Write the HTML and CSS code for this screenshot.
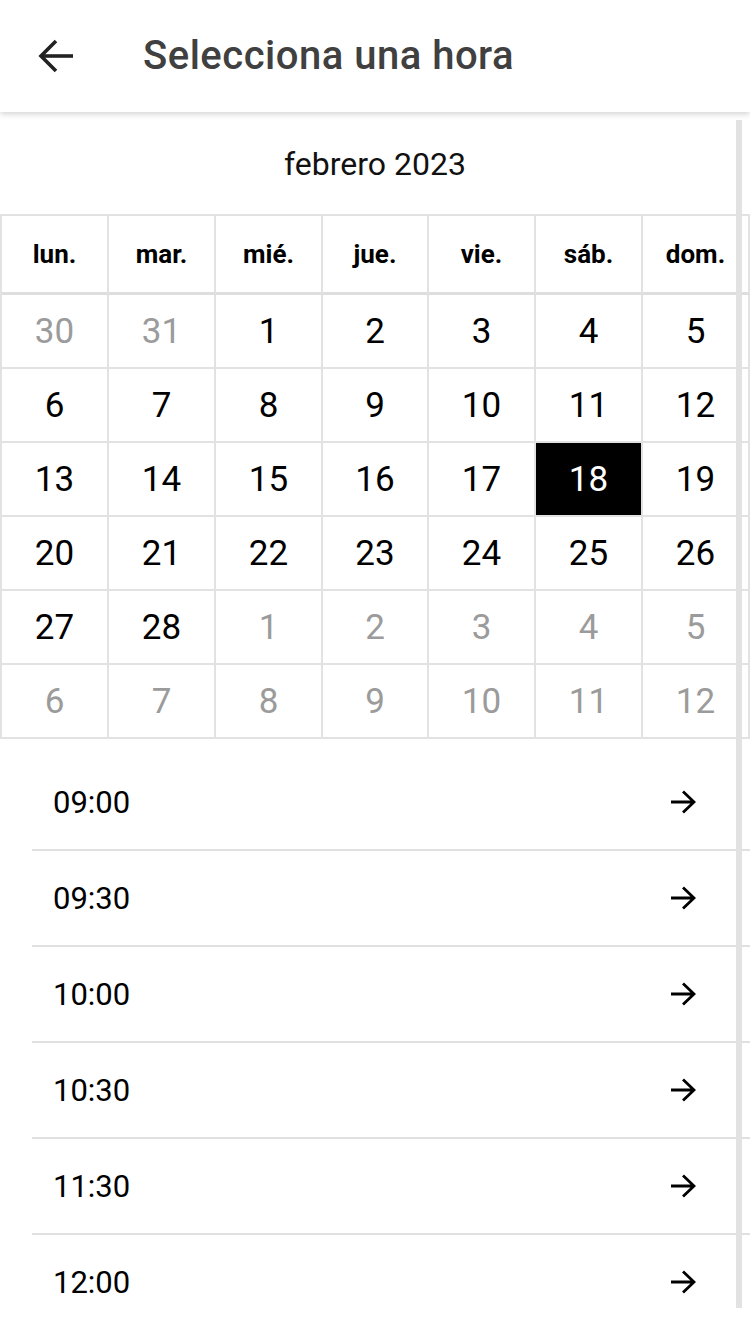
FILE: index.html
```html
<!DOCTYPE html>
<html lang="es">
<head>
<meta charset="utf-8">
<title>Selecciona una hora</title>
<link rel="stylesheet" href="styles.css">
</head>
<body>
<div class="app">
  <header class="topbar">
    <button class="back" aria-label="Atrás">
      <svg width="36" height="34" viewBox="0 0 36 34" aria-hidden="true">
        <path d="M35 17H3" fill="none" stroke="#222" stroke-width="3.6"/>
        <path d="M18 2L3 17L18 32" fill="none" stroke="#222" stroke-width="3.6"/>
      </svg>
    </button>
    <h1 class="title">Selecciona una hora</h1>
  </header>

  <main class="content">
    <div class="month">febrero 2023</div>

    <div class="calendar">
      <div class="wd">lun.</div>
      <div class="wd">mar.</div>
      <div class="wd">mié.</div>
      <div class="wd">jue.</div>
      <div class="wd">vie.</div>
      <div class="wd">sáb.</div>
      <div class="wd">dom.</div>

      <div class="day out">30</div>
      <div class="day out">31</div>
      <div class="day">1</div>
      <div class="day">2</div>
      <div class="day">3</div>
      <div class="day">4</div>
      <div class="day">5</div>

      <div class="day">6</div>
      <div class="day">7</div>
      <div class="day">8</div>
      <div class="day">9</div>
      <div class="day">10</div>
      <div class="day">11</div>
      <div class="day">12</div>

      <div class="day">13</div>
      <div class="day">14</div>
      <div class="day">15</div>
      <div class="day">16</div>
      <div class="day">17</div>
      <div class="day selected">18</div>
      <div class="day">19</div>

      <div class="day">20</div>
      <div class="day">21</div>
      <div class="day">22</div>
      <div class="day">23</div>
      <div class="day">24</div>
      <div class="day">25</div>
      <div class="day">26</div>

      <div class="day">27</div>
      <div class="day">28</div>
      <div class="day out">1</div>
      <div class="day out">2</div>
      <div class="day out">3</div>
      <div class="day out">4</div>
      <div class="day out">5</div>

      <div class="day out">6</div>
      <div class="day out">7</div>
      <div class="day out">8</div>
      <div class="day out">9</div>
      <div class="day out">10</div>
      <div class="day out">11</div>
      <div class="day out">12</div>
    </div>

    <ul class="slots">
      <li class="slot"><span class="time">09:00</span><svg class="go" width="26" height="24" viewBox="0 0 26 24" aria-hidden="true"><path d="M1 12H24M13 1.5L24 12L13 22.5" fill="none" stroke="#000" stroke-width="2.8"/></svg></li>
      <li class="slot"><span class="time">09:30</span><svg class="go" width="26" height="24" viewBox="0 0 26 24" aria-hidden="true"><path d="M1 12H24M13 1.5L24 12L13 22.5" fill="none" stroke="#000" stroke-width="2.8"/></svg></li>
      <li class="slot"><span class="time">10:00</span><svg class="go" width="26" height="24" viewBox="0 0 26 24" aria-hidden="true"><path d="M1 12H24M13 1.5L24 12L13 22.5" fill="none" stroke="#000" stroke-width="2.8"/></svg></li>
      <li class="slot"><span class="time">10:30</span><svg class="go" width="26" height="24" viewBox="0 0 26 24" aria-hidden="true"><path d="M1 12H24M13 1.5L24 12L13 22.5" fill="none" stroke="#000" stroke-width="2.8"/></svg></li>
      <li class="slot"><span class="time">11:30</span><svg class="go" width="26" height="24" viewBox="0 0 26 24" aria-hidden="true"><path d="M1 12H24M13 1.5L24 12L13 22.5" fill="none" stroke="#000" stroke-width="2.8"/></svg></li>
      <li class="slot"><span class="time">12:00</span><svg class="go" width="26" height="24" viewBox="0 0 26 24" aria-hidden="true"><path d="M1 12H24M13 1.5L24 12L13 22.5" fill="none" stroke="#000" stroke-width="2.8"/></svg></li>
    </ul>

    <div class="scrollbar"></div>
  </main>
</div>
</body>
</html>
```

FILE: styles.css
```css
* {
  box-sizing: border-box;
}

html, body {
  margin: 0;
  padding: 0;
  background: #fff;
}

body {
  font-family: Roboto, "Noto Sans", "Liberation Sans", sans-serif;
  color: #000;
  width: 750px;
  height: 1326px;
  overflow: hidden;
}

.app {
  width: 750px;
  height: 1326px;
  display: flex;
  flex-direction: column;
}

.topbar {
  position: relative;
  z-index: 2;
  height: 112px;
  flex: 0 0 112px;
  display: flex;
  align-items: center;
  background: #fff;
  box-shadow: 0 2px 6px rgba(0, 0, 0, 0.18);
}

.back {
  border: 0;
  background: none;
  padding: 0;
  margin: 0 0 0 38px;
  width: 36px;
  height: 34px;
  display: flex;
  cursor: pointer;
}

.title {
  margin: 0 0 0 69px;
  font-size: 40px;
  font-weight: 500;
  color: #404040;
  line-height: 1;
  letter-spacing: 0.5px;
}

.content {
  position: relative;
  flex: 1 1 auto;
}

.month {
  height: 102px;
  display: flex;
  align-items: center;
  justify-content: center;
  font-size: 32px;
  color: #111;
  padding-top: 2px;
}

.calendar {
  display: grid;
  grid-template-columns: 107px 107px 107px 106px 107px 107px 107px;
  border-top: 2px solid #e2e2e2;
  border-left: 2px solid #e2e2e2;
  width: 750px;
}

.wd {
  height: 79px;
  display: flex;
  align-items: center;
  justify-content: center;
  font-size: 26px;
  font-weight: 700;
  color: #000;
  border-right: 2px solid #e2e2e2;
  border-bottom: 3px solid #dedede;
}

.day {
  height: 74px;
  display: flex;
  align-items: center;
  justify-content: center;
  font-size: 35px;
  color: #000;
  border-right: 2px solid #e2e2e2;
  border-bottom: 2px solid #e2e2e2;
}

.day.out {
  color: #9b9b9b;
}

.day.selected {
  background: #000;
  color: #fff;
}

.slots {
  list-style: none;
  margin: 0;
  padding: 16px 0 0 32px;
}

.slot {
  height: 96px;
  display: flex;
  align-items: center;
  justify-content: space-between;
  padding: 0 54px 0 21px;
  border-bottom: 2px solid #e0e0e0;
}

.time {
  font-size: 31px;
  color: #000;
}

.go {
  display: block;
}

.scrollbar {
  position: absolute;
  top: 8px;
  right: 8px;
  width: 6px;
  height: 1188px;
  background: #e2e2e2;
}
```
